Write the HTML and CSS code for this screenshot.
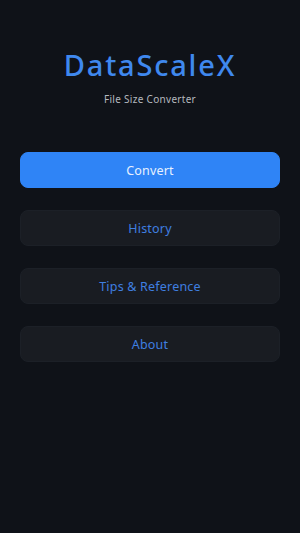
FILE: index.html
```html
<!DOCTYPE html>
<html>
<head>
<meta charset="utf-8">
<link rel="stylesheet" href="styles.css">
</head>
<body>
<div class="app">
  <header class="header">
    <h1 class="title">DataScaleX</h1>
    <p class="subtitle">File Size Converter</p>
  </header>
  <nav class="menu">
    <button class="btn btn-primary">Convert</button>
    <button class="btn">History</button>
    <button class="btn">Tips &amp; Reference</button>
    <button class="btn">About</button>
  </nav>
</div>
</body>
</html>
```
FILE: styles.css
```css
html, body {
  margin: 0;
  padding: 0;
  background: #0f1218;
  height: 100%;
}
.app {
  font-family: "Noto Sans", "DejaVu Sans", sans-serif;
  padding: 0 20px;
  display: flex;
  flex-direction: column;
}
.header {
  display: flex;
  flex-direction: column;
  align-items: center;
  padding-top: 46px;
}
.title {
  margin: 0;
  font-size: 29px;
  font-weight: 500;
  color: #3f88ee;
  letter-spacing: 1.8px;
  line-height: 38px;
}
.subtitle {
  margin: 8px 0 0;
  font-size: 10px;
  color: #b4b8be;
  line-height: 14px;
  letter-spacing: 0.3px;
}
.menu {
  display: flex;
  flex-direction: column;
  gap: 22px;
  margin-top: 46px;
}
.btn {
  height: 36px;
  border-radius: 8px;
  border: 1px solid #1c2027;
  background: #191c22;
  color: #3f7fe0;
  font-family: inherit;
  font-size: 12.5px;
  letter-spacing: 0.2px;
  padding: 0;
}
.btn-primary {
  background: #2f84f6;
  border-color: #2f84f6;
  color: #e8f1ff;
}
```
